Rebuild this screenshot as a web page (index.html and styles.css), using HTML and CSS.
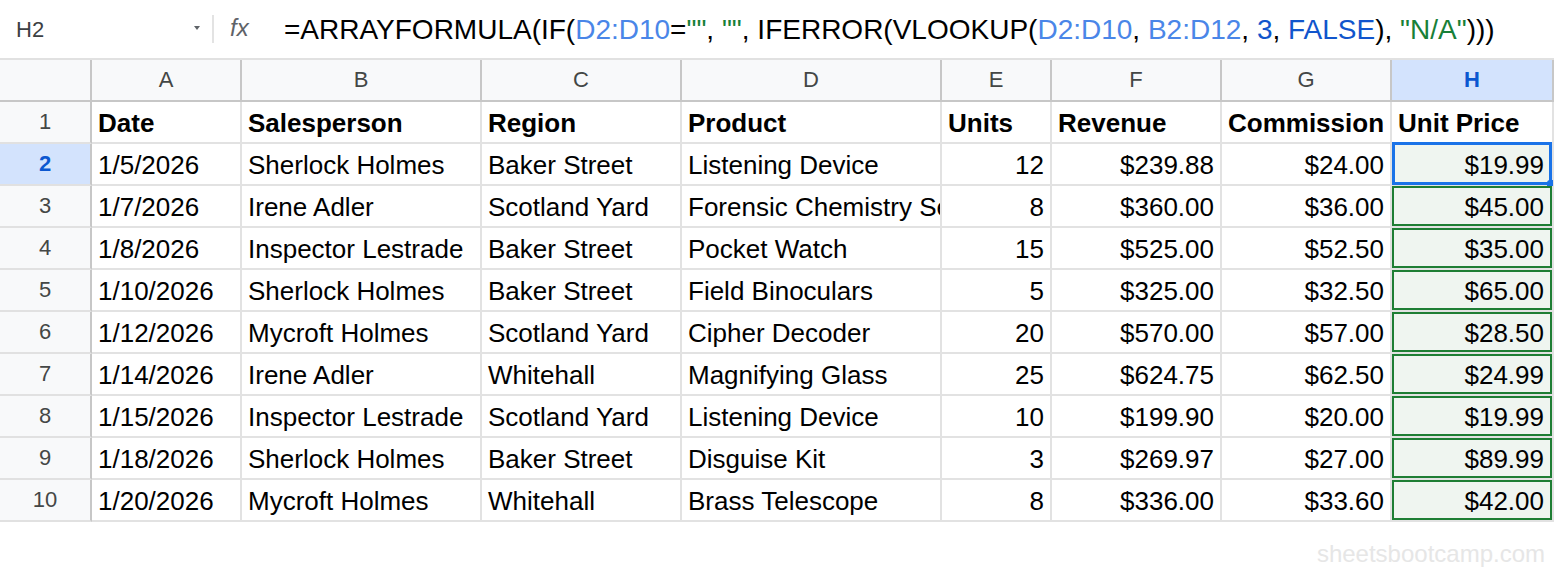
FILE: index.html
```html
<!DOCTYPE html>
<html lang="en">
<head>
<meta charset="utf-8">
<title>Sheet</title>
<link rel="stylesheet" href="styles.css">
</head>
<body>
<div class="formula-bar">
  <div class="namebox"><span class="name">H2</span><span class="caret"></span></div>
  <div class="sep"></div>
  <div class="fx">fx</div>
  <div class="formula">=ARRAYFORMULA(IF(<span class="rng">D2:D10</span>=<span class="str">""</span>, <span class="str">""</span>, IFERROR(VLOOKUP(<span class="rng">D2:D10</span>, <span class="rng">B2:D12</span>, <span class="num">3</span>, <span class="num">FALSE</span>), <span class="str">"N/A"</span>)))</div>
</div>

<div class="grid">
  <div class="ch corner"></div>
  <div class="ch">A</div>
  <div class="ch">B</div>
  <div class="ch">C</div>
  <div class="ch">D</div>
  <div class="ch">E</div>
  <div class="ch">F</div>
  <div class="ch">G</div>
  <div class="ch sel">H</div>

  <div class="rh">1</div>
  <div class="c b">Date</div>
  <div class="c b">Salesperson</div>
  <div class="c b">Region</div>
  <div class="c b">Product</div>
  <div class="c b">Units</div>
  <div class="c b">Revenue</div>
  <div class="c b">Commission</div>
  <div class="c b">Unit Price</div>

  <div class="rh sel">2</div>
  <div class="c">1/5/2026</div>
  <div class="c">Sherlock Holmes</div>
  <div class="c">Baker Street</div>
  <div class="c">Listening Device</div>
  <div class="c r">12</div>
  <div class="c r">$239.88</div>
  <div class="c r">$24.00</div>
  <div class="c r h active">$19.99</div>

  <div class="rh">3</div>
  <div class="c">1/7/2026</div>
  <div class="c">Irene Adler</div>
  <div class="c">Scotland Yard</div>
  <div class="c">Forensic Chemistry Set</div>
  <div class="c r">8</div>
  <div class="c r">$360.00</div>
  <div class="c r">$36.00</div>
  <div class="c r h arr">$45.00</div>

  <div class="rh">4</div>
  <div class="c">1/8/2026</div>
  <div class="c">Inspector Lestrade</div>
  <div class="c">Baker Street</div>
  <div class="c">Pocket Watch</div>
  <div class="c r">15</div>
  <div class="c r">$525.00</div>
  <div class="c r">$52.50</div>
  <div class="c r h arr">$35.00</div>

  <div class="rh">5</div>
  <div class="c">1/10/2026</div>
  <div class="c">Sherlock Holmes</div>
  <div class="c">Baker Street</div>
  <div class="c">Field Binoculars</div>
  <div class="c r">5</div>
  <div class="c r">$325.00</div>
  <div class="c r">$32.50</div>
  <div class="c r h arr">$65.00</div>

  <div class="rh">6</div>
  <div class="c">1/12/2026</div>
  <div class="c">Mycroft Holmes</div>
  <div class="c">Scotland Yard</div>
  <div class="c">Cipher Decoder</div>
  <div class="c r">20</div>
  <div class="c r">$570.00</div>
  <div class="c r">$57.00</div>
  <div class="c r h arr">$28.50</div>

  <div class="rh">7</div>
  <div class="c">1/14/2026</div>
  <div class="c">Irene Adler</div>
  <div class="c">Whitehall</div>
  <div class="c">Magnifying Glass</div>
  <div class="c r">25</div>
  <div class="c r">$624.75</div>
  <div class="c r">$62.50</div>
  <div class="c r h arr">$24.99</div>

  <div class="rh">8</div>
  <div class="c">1/15/2026</div>
  <div class="c">Inspector Lestrade</div>
  <div class="c">Scotland Yard</div>
  <div class="c">Listening Device</div>
  <div class="c r">10</div>
  <div class="c r">$199.90</div>
  <div class="c r">$20.00</div>
  <div class="c r h arr">$19.99</div>

  <div class="rh">9</div>
  <div class="c">1/18/2026</div>
  <div class="c">Sherlock Holmes</div>
  <div class="c">Baker Street</div>
  <div class="c">Disguise Kit</div>
  <div class="c r">3</div>
  <div class="c r">$269.97</div>
  <div class="c r">$27.00</div>
  <div class="c r h arr">$89.99</div>

  <div class="rh">10</div>
  <div class="c">1/20/2026</div>
  <div class="c">Mycroft Holmes</div>
  <div class="c">Whitehall</div>
  <div class="c">Brass Telescope</div>
  <div class="c r">8</div>
  <div class="c r">$336.00</div>
  <div class="c r">$33.60</div>
  <div class="c r h arr">$42.00</div>
</div>

<div class="footer">sheetsbootcamp.com</div>
</body>
</html>
```

FILE: styles.css
```css
* { box-sizing: border-box; }

body {
  margin: 0;
  background: #ffffff;
  font-family: "Liberation Sans", Arial, sans-serif;
  color: #000;
}

.formula-bar {
  height: 60px;
  display: flex;
  align-items: center;
  border-bottom: 2px solid #e1e1e1;
}

.namebox {
  width: 212px;
  display: flex;
  align-items: center;
  padding-left: 16px;
  padding-right: 12px;
}

.name {
  flex: 1;
  font-size: 22px;
  color: #3c4043;
  padding-top: 2px;
}

.caret {
  width: 0;
  height: 0;
  border-left: 3px solid transparent;
  border-right: 3px solid transparent;
  border-top: 4px solid #5f6368;
  margin-top: -2px;
}

.sep {
  width: 2px;
  height: 28px;
  background: #e3e3e3;
}

.fx {
  margin-left: 16px;
  width: 54px;
  font-size: 24px;
  font-style: italic;
  color: #5f6368;
  padding-bottom: 2px;
}

.formula {
  font-size: 28px;
  color: #000;
  white-space: nowrap;
  padding-top: 2px;
}

.rng { color: #4a86e8; }
.str { color: #188038; }
.num { color: #1155cc; }

.grid {
  display: grid;
  grid-template-columns: 92px 150px 240px 200px 260px 110px 170px 170px 162px;
  grid-auto-rows: 42px;
}

.ch {
  background: #f8f9fa;
  border-right: 2px solid #c7c7c7;
  border-bottom: 2px solid #c7c7c7;
  text-align: center;
  font-size: 22px;
  line-height: 40px;
  color: #444746;
}

.ch.sel {
  background: #d3e3fd;
  color: #0b57d0;
  font-weight: bold;
}

.rh {
  background: #f8f9fa;
  border-right: 2px solid #c7c7c7;
  border-bottom: 2px solid #e1e1e1;
  text-align: center;
  font-size: 22px;
  line-height: 40px;
  color: #444746;
}

.rh.sel {
  background: #d3e3fd;
  color: #0b57d0;
  font-weight: bold;
}

.c {
  border-right: 2px solid #e2e2e2;
  border-bottom: 2px solid #e2e2e2;
  padding: 2px 7px 0 6px;
  font-size: 26px;
  line-height: 38px;
  white-space: nowrap;
  overflow: hidden;
}

.c.b { font-weight: bold; }

.c.r {
  text-align: right;
  padding-right: 6px;
}

.c.h {
  background: #eff5f0;
  padding-right: 8px;
}

.c.arr {
  box-shadow: inset 0 0 0 2px #1e7e34;
}

.c.active {
  position: relative;
  overflow: visible;
}

.c.active::after {
  content: "";
  position: absolute;
  top: -2px;
  left: 0;
  right: 0;
  bottom: -1px;
  border: 3px solid #1a73e8;
}

.c.active::before {
  content: "";
  position: absolute;
  right: -1px;
  bottom: -2px;
  width: 6px;
  height: 6px;
  background: #1a73e8;
  border-top-left-radius: 3px;
  z-index: 1;
}

.footer {
  padding-top: 18px;
  padding-right: 9px;
  text-align: right;
  font-size: 24px;
  line-height: 28px;
  color: #e6e6e6;
}
```
